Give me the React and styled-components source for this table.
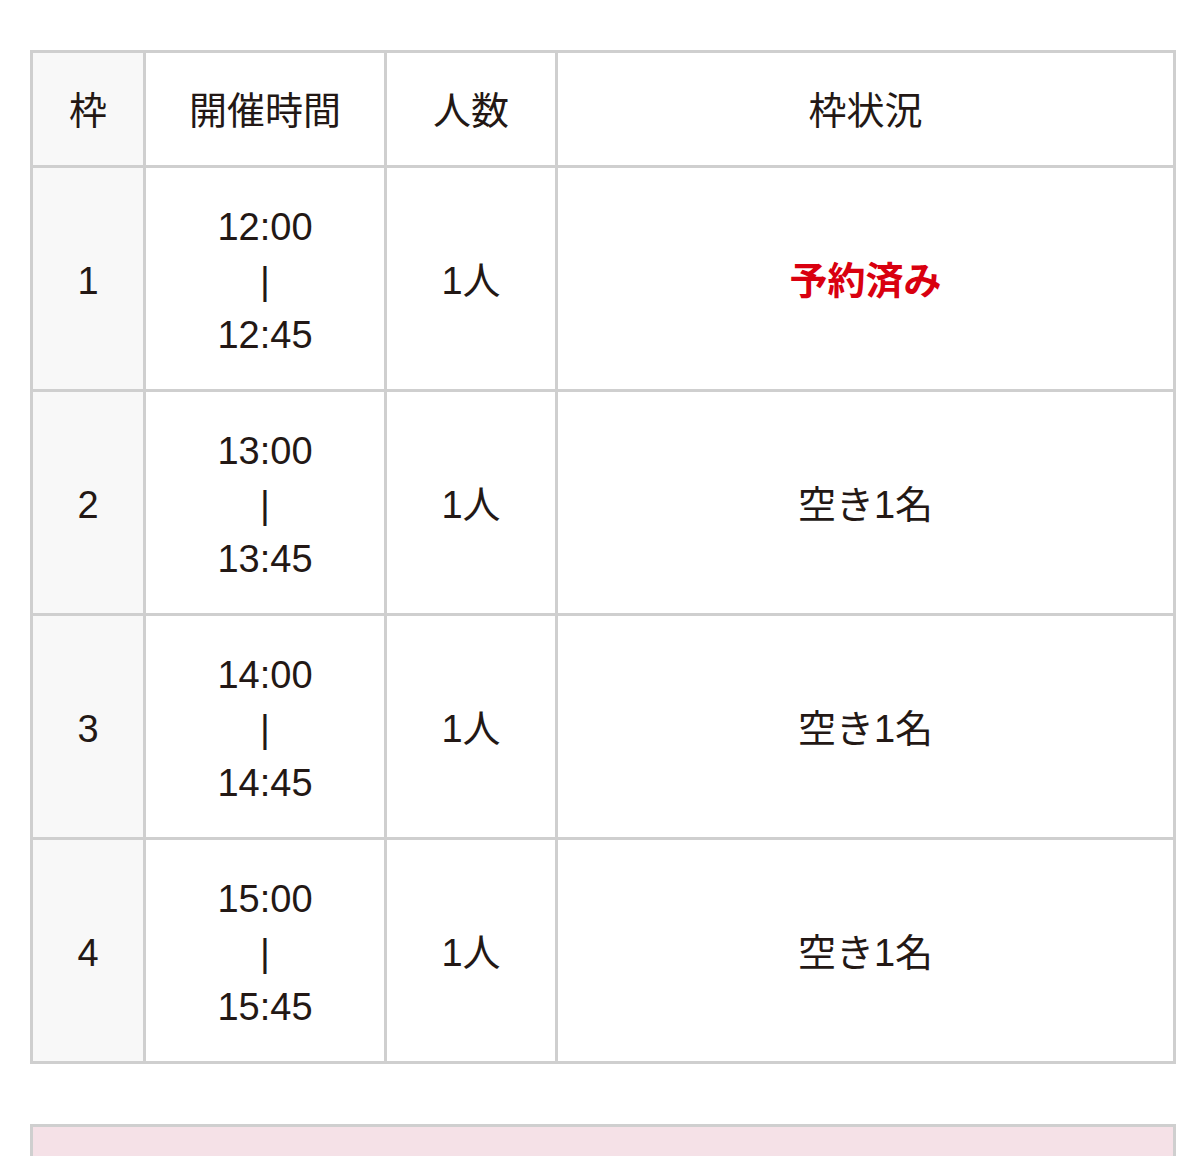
import React from "react";
import styled, { createGlobalStyle } from "styled-components";

const GlobalStyle = createGlobalStyle`
  html, body {
    margin: 0;
    padding: 0;
    background: #fff;
  }
  body {
    font-family: "Liberation Sans", "Noto Sans CJK JP", sans-serif;
    color: #231815;
  }
`;

const Page = styled.div`
  padding: 50px 8px 0 30px;
`;

const Table = styled.table`
  width: 1146px;
  table-layout: fixed;
  border-collapse: separate;
  border-spacing: 0;
  border-top: 3px solid #cfcfcf;
  border-left: 3px solid #cfcfcf;
`;

const Cell = styled.td`
  box-sizing: border-box;
  width: ${(p) => p.$w}px;
  height: ${(p) => (p.$head ? 115 : 224)}px;
  padding: 4px 0 0;
  border-right: 3px solid #cfcfcf;
  border-bottom: 3px solid #cfcfcf;
  background: ${(p) => (p.$shade ? "#f8f8f8" : "#fff")};
  text-align: center;
  vertical-align: middle;
  font-size: 38px;
  line-height: 54px;
  font-weight: normal;
  color: #231815;
`;

const Status = styled.span`
  color: ${(p) => (p.$booked ? "#d9000f" : "#231815")};
  font-weight: ${(p) => (p.$booked ? "bold" : "normal")};
`;

const TimeBlock = styled.div`
  display: flex;
  flex-direction: column;
  align-items: center;
`;

const Notice = styled.div`
  margin-top: 60px;
  width: 1146px;
  box-sizing: border-box;
  height: 110px;
  border: 3px solid #cfcfcf;
  background: #f5e1e7;
`;

const widths = [113, 241, 171, 618];

const slots = [
  { no: 1, from: "12:00", to: "12:45", people: "1人", status: "予約済み", booked: true },
  { no: 2, from: "13:00", to: "13:45", people: "1人", status: "空き1名" },
  { no: 3, from: "14:00", to: "14:45", people: "1人", status: "空き1名" },
  { no: 4, from: "15:00", to: "15:45", people: "1人", status: "空き1名" },
];

export default function App() {
  return (
    <Page>
      <GlobalStyle />
      <Table>
        <thead>
          <tr>
            <Cell as="th" $head $shade $w={widths[0]}>枠</Cell>
            <Cell as="th" $head $w={widths[1]}>開催時間</Cell>
            <Cell as="th" $head $w={widths[2]}>人数</Cell>
            <Cell as="th" $head $w={widths[3]}>枠状況</Cell>
          </tr>
        </thead>
        <tbody>
          {slots.map((s) => (
            <tr key={s.no}>
              <Cell $shade>{s.no}</Cell>
              <Cell>
                <TimeBlock>
                  <span>{s.from}</span>
                  <span>|</span>
                  <span>{s.to}</span>
                </TimeBlock>
              </Cell>
              <Cell>{s.people}</Cell>
              <Cell>
                <Status $booked={s.booked}>{s.status}</Status>
              </Cell>
            </tr>
          ))}
        </tbody>
      </Table>
      <Notice />
    </Page>
  );
}
